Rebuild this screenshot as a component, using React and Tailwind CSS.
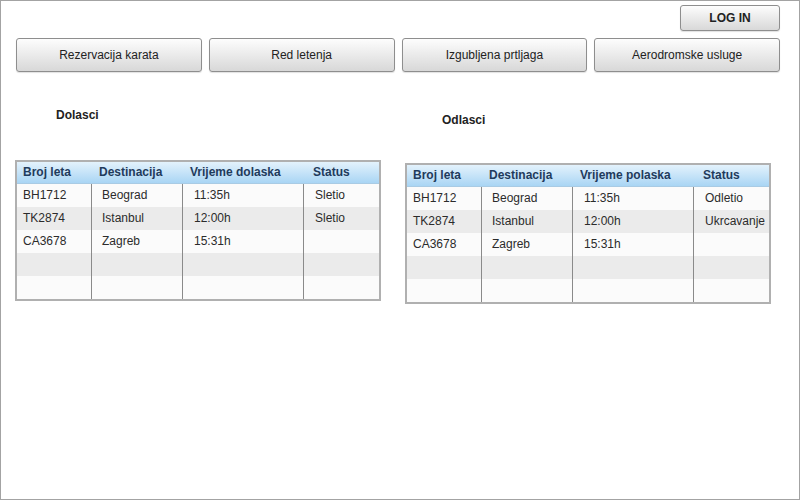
// Aerodrom - početna stranica (dolasci / odlasci)

const dolasci = [
    { broj: "BH1712", dest: "Beograd", vrijeme: "11:35h", status: "Sletio" },
    { broj: "TK2874", dest: "Istanbul", vrijeme: "12:00h", status: "Sletio" },
    { broj: "CA3678", dest: "Zagreb", vrijeme: "15:31h", status: "" },
    null,
    null,
];

const odlasci = [
    { broj: "BH1712", dest: "Beograd", vrijeme: "11:35h", status: "Odletio" },
    { broj: "TK2874", dest: "Istanbul", vrijeme: "12:00h", status: "Ukrcavanje" },
    { broj: "CA3678", dest: "Zagreb", vrijeme: "15:31h", status: "" },
    null,
    null,
];

const meni = ["Rezervacija karata", "Red letenja", "Izgubljena prtljaga", "Aerodromske usluge"];

function Dugme({ children, className = "" }) {
    return (
        <button
            className={`flex items-center justify-center rounded-[3px] border border-[#8e8e8e] bg-linear-to-b from-[#fdfdfd] to-[#d8d8d8] text-[12px] text-[#222] shadow-[0_1px_1px_rgba(0,0,0,.12)] ${className}`}
        >
            {children}
        </button>
    );
}

function Tabela({ kolona, redovi }) {
    return (
        <div className="w-[366px] border-2 border-[#b0b0b0] bg-white">
            {/* zaglavlje */}
            <div className="grid h-[22px] grid-cols-[75px_91px_121px_1fr] border-b border-[#a9cbe4] bg-linear-to-b from-[#e3f2fc] to-[#a9d5f4] text-[12px] font-bold leading-[20px] text-[#1f3b5c]">
                <div className="pl-[6px]">Broj leta</div>
                <div className="pl-[7px]">Destinacija</div>
                <div className="pl-[7px]">{kolona}</div>
                <div className="pl-[9px]">Status</div>
            </div>
            {redovi.map((r, i) => (
                <div
                    key={i}
                    className={`grid h-[23px] grid-cols-[75px_91px_121px_1fr] text-[12px] leading-[16px] text-[#2b2b2b] ${i % 2 === 1 ? "bg-[#ebebeb]" : "bg-[#fbfbfb]"}`}
                >
                    <div className="border-r border-[#8a8a8a] pl-[6px] pt-[3px]">{r?.broj}</div>
                    <div className="border-r border-[#8a8a8a] pl-[10px] pt-[3px]">{r?.dest}</div>
                    <div className="border-r border-[#8a8a8a] pl-[11px] pt-[3px]">{r?.vrijeme}</div>
                    <div className="whitespace-nowrap pl-[11px] pt-[3px]">{r?.status}</div>
                </div>
            ))}
        </div>
    );
}

export default function App() {
    return (
        <div
            className="h-[500px] w-[800px] border border-[#a3a3a3] bg-white"
            style={{ fontFamily: '"Liberation Sans", Arial, sans-serif' }}
        >
            {/* log in */}
            <div className="flex justify-end pr-[19px] pt-[4px]">
                <Dugme className="h-[26px] w-[100px] font-bold">LOG IN</Dugme>
            </div>

            {/* glavni meni */}
            <div className="mt-[7px] grid grid-cols-4 gap-[7px] pl-[15px] pr-[19px]">
                {meni.map((m) => (
                    <Dugme key={m} className="h-[34px]">{m}</Dugme>
                ))}
            </div>

            {/* dolasci / odlasci */}
            <div className="flex items-start gap-[24px] pl-[14px]">
                <div className="flex flex-col">
                    <div className="ml-[41px] mt-[36px] text-[12px] font-bold leading-[14px] text-[#222]">Dolasci</div>
                    <div className="mt-[38px]">
                        <Tabela kolona="Vrijeme dolaska" redovi={dolasci} />
                    </div>
                </div>
                <div className="flex flex-col">
                    <div className="ml-[37px] mt-[41px] text-[12px] font-bold leading-[14px] text-[#222]">Odlasci</div>
                    <div className="mt-[36px]">
                        <Tabela kolona="Vrijeme polaska" redovi={odlasci} />
                    </div>
                </div>
            </div>
        </div>
    );
}
